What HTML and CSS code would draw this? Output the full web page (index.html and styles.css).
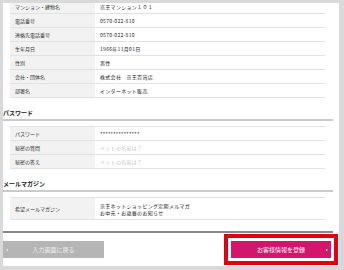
FILE: index.html
```html
<!DOCTYPE html>
<html lang="ja">
<head>
    <meta charset="UTF-8">
    <meta name="viewport" content="width=device-width, initial-scale=1.0">
    <title>お客様情報の確認</title>
    <link rel="stylesheet" href="styles.css">
</head>
<body>
    <div class="panel">
        <div class="inner">
            <table class="info">
                <tr><th>マンション・建物名</th><td>京王マンション１０１</td></tr>
                <tr><th>電話番号</th><td>0570-022-810</td></tr>
                <tr><th>連絡先電話番号</th><td>0570-022-810</td></tr>
                <tr><th>生年月日</th><td>1966年11月01日</td></tr>
                <tr><th>性別</th><td>男性</td></tr>
                <tr><th>会社・団体名</th><td>株式会社　京王百貨店</td></tr>
                <tr><th>部署名</th><td>インターネット販売</td></tr>
            </table>

            <h2 class="section-title">パスワード</h2>
            <table class="info boxed">
                <tr><th>パスワード</th><td>***************</td></tr>
                <tr><th>秘密の質問</th><td class="masked">ペットの名前は？</td></tr>
                <tr><th>秘密の答え</th><td class="masked">ペットの名前は？</td></tr>
            </table>

            <h2 class="section-title">メールマガジン</h2>
            <table class="info boxed">
                <tr class="tall">
                    <th>希望メールマガジン</th>
                    <td>京王ネットショッピング定期メルマガ<br>お中元・お歳暮のお知らせ</td>
                </tr>
            </table>

            <div class="actions">
                <button class="btn btn-back"><span class="arrow-left"></span><span>入力画面に戻る</span><span></span></button>
                <button class="btn btn-submit"><span></span><span>お客様情報を登録</span><span class="arrow-right"></span></button>
            </div>
        </div>
    </div>
</body>
</html>
```

FILE: styles.css
```css
body {
    margin: 0;
    background-color: #d9d9d9;
    font-family: "Noto Sans CJK JP", "Noto Sans", sans-serif;
    color: #333;
}
.panel {
    margin: 3px 5px 0 3px;
    height: 263px;
    background-color: #fff;
    overflow: hidden;
}
.inner {
    width: 330px;
    margin-top: -3px;
}
.info {
    width: 315px;
    margin: 0 8px 0 7px;
    border-collapse: collapse;
    font-size: 5px;
}
.info th,
.info td {
    height: 13px;
    padding: 0 5px;
    border-bottom: 1px solid #e2e2e2;
    text-align: left;
    font-weight: normal;
    line-height: 7px;
}
.info th {
    width: 75px;
    background-color: #f2f2f2;
    color: #333;
}
.info td {
    letter-spacing: 0.3px;
    color: #222;
}
.boxed {
    margin-top: 5px;
    border-top: 1px solid #e2e2e2;
}
.info .tall th,
.info .tall td {
    height: 21px;
}
.info .masked {
    color: #c4c4c4;
    filter: blur(0.6px);
}
.section-title {
    margin: 11px 0 0;
    padding: 0 0 2px;
    font-size: 6px;
    line-height: 8px;
    font-weight: bold;
    color: #222;
    border-bottom: 2px solid #cacaca;
}
.actions {
    display: flex;
    justify-content: space-between;
    margin-top: 11px;
    padding-top: 8px;
    border-top: 2px solid #888;
}
.btn {
    display: grid;
    grid-template-columns: 8px 1fr 8px;
    align-items: center;
    height: 17px;
    padding: 0;
    border: none;
    font-family: inherit;
    font-size: 6px;
    color: #fff;
}
.btn-back {
    width: 101px;
    background-color: #b5b5b5;
    color: #ededed;
}
.btn-submit {
    width: 100px;
    margin-right: 2px;
    background-color: #d3166c;
    outline: 4px solid #e00012;
    outline-offset: 3px;
}
.arrow-left {
    justify-self: center;
    width: 0;
    height: 0;
    border-top: 1.5px solid transparent;
    border-bottom: 1.5px solid transparent;
    border-right: 2px solid #eee;
}
.arrow-right {
    justify-self: center;
    width: 0;
    height: 0;
    border-top: 1.5px solid transparent;
    border-bottom: 1.5px solid transparent;
    border-left: 2px solid #fff;
}
```
